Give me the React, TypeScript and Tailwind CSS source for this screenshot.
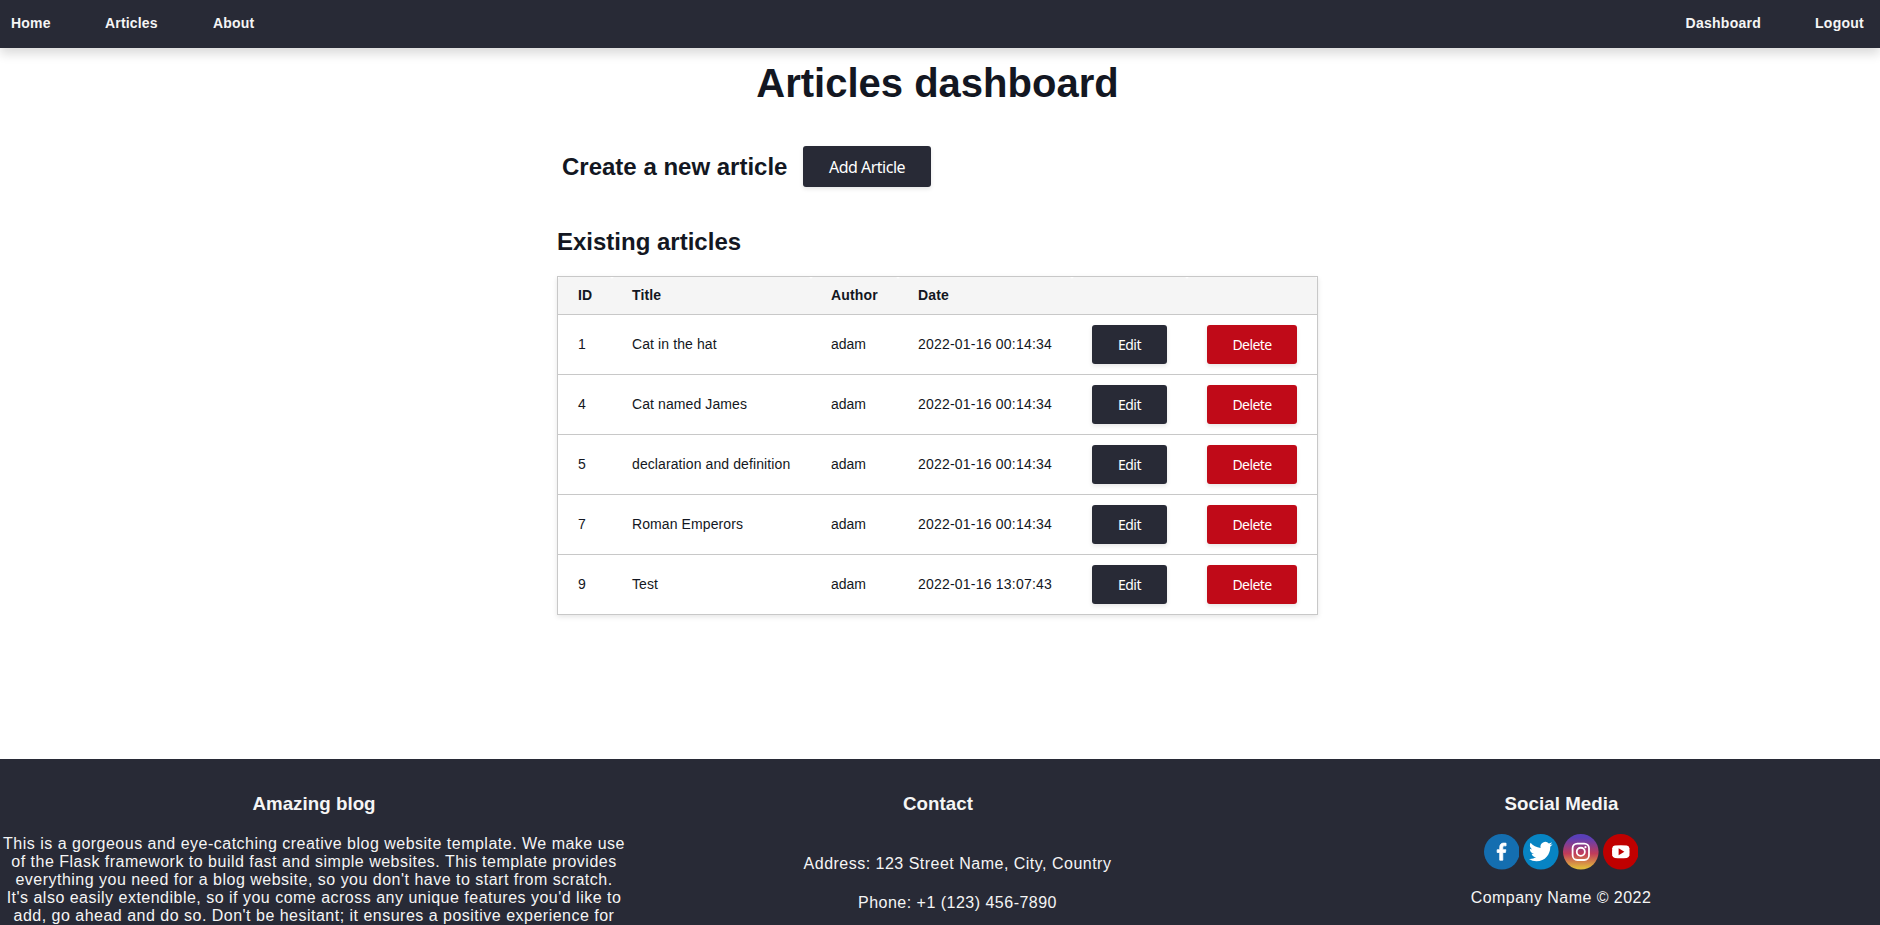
import React from "react";

const articles = [
  { id: 1, title: "Cat in the hat", author: "adam", date: "2022-01-16 00:14:34" },
  { id: 4, title: "Cat named James", author: "adam", date: "2022-01-16 00:14:34" },
  { id: 5, title: "declaration and definition", author: "adam", date: "2022-01-16 00:14:34" },
  { id: 7, title: "Roman Emperors", author: "adam", date: "2022-01-16 00:14:34" },
  { id: 9, title: "Test", author: "adam", date: "2022-01-16 13:07:43" },
];

const aboutLines = [
  "This is a gorgeous and eye-catching creative blog website template. We make use",
  "of the Flask framework to build fast and simple websites. This template provides",
  "everything you need for a blog website, so you don't have to start from scratch.",
  "It's also easily extendible, so if you come across any unique features you'd like to",
  "add, go ahead and do so. Don't be hesitant; it ensures a positive experience for",
];

const headers = ["ID", "Title", "Author", "Date", "", ""];

const buttonBase =
  "rounded-[3px] font-['Noto_Sans',sans-serif] text-white shadow-[0_2px_4px_rgba(0,0,0,0.1)]";

const cell = "border-t border-[#c8c8c8] p-0 pl-5";

function NavBar() {
  return (
    <nav className="relative flex h-12 shrink-0 justify-between bg-[#282a36] pl-[11px] pr-[16px] text-[14px] font-bold leading-[46px] text-[#f5f5f5] shadow-[0_6px_10px_rgba(0,0,0,0.14)]">
      <div className="flex tracking-[0.18px]">
        <a className="w-[94px]">Home</a>
        <a className="w-[108px]">Articles</a>
        <a>About</a>
      </div>
      <div className="flex gap-[54px] tracking-[0.26px]">
        <a>Dashboard</a>
        <a>Logout</a>
      </div>
    </nav>
  );
}

function ArticlesTable() {
  return (
    <div className="mt-5 w-[761px] border border-[#c8c8c8] shadow-[0_2px_5px_rgba(0,0,0,0.1)]">
      <table className="w-[759px] table-fixed border-separate border-spacing-0 text-left text-[14px]">
        <colgroup>
          <col className="w-[54px]" />
          <col className="w-[199px]" />
          <col className="w-[87px]" />
          <col className="w-[174px]" />
          <col className="w-[115px]" />
          <col className="w-[130px]" />
        </colgroup>
        <thead>
          <tr className="h-[37px]">
            {headers.map((h, i) => (
              <th key={i} className="rounded-t-[3px] bg-[#f5f5f5] p-0 pl-5 font-bold tracking-[0.15px]">
                {h}
              </th>
            ))}
          </tr>
        </thead>
        <tbody>
          {articles.map((a) => (
            <tr key={a.id} className="h-[60px]">
              <td className={cell}>{a.id}</td>
              <td className={`${cell} tracking-[0.1px]`}>{a.title}</td>
              <td className={cell}>{a.author}</td>
              <td className={`${cell} tracking-[0.21px]`}>{a.date}</td>
              <td className={cell}>
                <button className={`${buttonBase} block h-[39px] w-[75px] bg-[#282a36] text-[14px] tracking-[-0.55px]`}>Edit</button>
              </td>
              <td className={cell}>
                <button className={`${buttonBase} block h-[39px] w-[90px] bg-[#c00a18] text-[14px] tracking-[-0.6px]`}>Delete</button>
              </td>
            </tr>
          ))}
        </tbody>
      </table>
    </div>
  );
}

function SocialIcons() {
  return (
    <div className="mt-[19px] flex h-9 justify-center gap-1 pr-px">
      <svg className="size-[35.6px]" viewBox="0 0 36 36">
        <circle cx="18" cy="18" r="18" fill="#146eb0" />
        <path fill="#fff" stroke="#fff" strokeWidth="0.8" strokeLinejoin="round" d="M15.9 26.5v-7.8h-2.6v-2.8h2.6v-2.3c0-2.9 1.6-4.4 4.1-4.4 1.1 0 2.1.1 2.3.1v2.7h-1.6c-1.3 0-1.7.6-1.7 1.6v2.3h3.1l-.4 2.8h-2.7v7.8z" />
      </svg>
      <svg className="size-[35.6px]" viewBox="0 0 36 36">
        <circle cx="18" cy="18" r="18" fill="#0784c3" />
        <path fill="#fff" transform="translate(6 5.8)" d="M23.953 4.57a10 10 0 01-2.825.775 4.958 4.958 0 002.163-2.723c-.951.555-2.005.959-3.127 1.184a4.92 4.92 0 00-8.384 4.482C7.69 8.095 4.067 6.13 1.64 3.162a4.822 4.822 0 00-.666 2.475c0 1.71.87 3.213 2.188 4.096a4.904 4.904 0 01-2.228-.616v.06a4.923 4.923 0 003.946 4.827 4.996 4.996 0 01-2.212.085 4.936 4.936 0 004.604 3.417 9.867 9.867 0 01-6.102 2.105c-.39 0-.779-.023-1.17-.067a13.995 13.995 0 007.557 2.209c9.053 0 13.998-7.496 13.998-13.985 0-.21 0-.42-.015-.63A9.935 9.935 0 0024 4.59z" />
      </svg>
      <svg className="size-[35.6px]" viewBox="0 0 36 36">
        <defs>
          <linearGradient id="insta" x1="0" y1="0" x2="0" y2="1">
            <stop offset="0.1" stopColor="#5a3fb8" />
            <stop offset="0.55" stopColor="#c13b5a" />
            <stop offset="0.95" stopColor="#e0b83c" />
          </linearGradient>
        </defs>
        <circle cx="18" cy="18" r="18" fill="url(#insta)" />
        <g fill="none" stroke="#fff" strokeWidth="1.8">
          <rect x="9.7" y="9.7" width="16.6" height="16.6" rx="4.8" />
          <circle cx="18" cy="18" r="4.1" />
        </g>
        <circle cx="22.7" cy="13.3" r="1.1" fill="#fff" />
      </svg>
      <svg className="size-[35.6px]" viewBox="0 0 36 36">
        <circle cx="18" cy="18" r="18" fill="#c00000" />
        <path fill="#fff" d="M12 11.7Q18 11.2 24 11.7Q26.4 12 26.7 14.4Q27 18 26.7 21.6Q26.4 24 24 24.3Q18 24.8 12 24.3Q9.6 24 9.3 21.6Q9 18 9.3 14.4Q9.6 12 12 11.7z" />
        <path fill="#c00000" d="M15.8 14.5v7l5.8-3.5z" />
      </svg>
    </div>
  );
}

function Footer() {
  const heading = "text-[18.72px] font-bold leading-[22px] tracking-[0.05px]";
  return (
    <footer className="flex h-[166px] shrink-0 overflow-hidden bg-[#282a36] pl-[2px] pt-[34px] text-center text-[16px] leading-[18px] text-[#f5f5f5]">
      <section className="w-[624px] shrink-0">
        <h3 className={heading}>Amazing blog</h3>
        <p className="mt-[20px] whitespace-nowrap tracking-[0.49px]">
          {aboutLines.map((line) => (
            <span key={line} className="block">{line}</span>
          ))}
        </p>
      </section>
      <section className="w-[624px] shrink-0">
        <h3 className={heading}>Contact</h3>
        <ul className="mt-[40px] flex flex-col gap-[21px] pl-[39px] tracking-[0.49px]">
          <li>Address: 123 Street Name, City, Country</li>
          <li>Phone: +1 (123) 456-7890</li>
        </ul>
      </section>
      <section className="w-[623px] shrink-0">
        <h3 className={heading}>Social Media</h3>
        <SocialIcons />
        <p className="mt-[19px] pr-px tracking-[0.46px]">Company Name © 2022</p>
      </section>
    </footer>
  );
}

export default function App() {
  return (
    <div className="flex h-[925px] w-full flex-col overflow-hidden bg-white font-['Liberation_Sans',Arial,sans-serif] text-[#131722]">
      <NavBar />
      <main className="flex flex-1 flex-col pl-[557px]">
        <h1 className="mt-[12px] w-[761px] text-center text-[40px] font-bold leading-[46px]">Articles dashboard</h1>
        <div className="mt-10 flex items-center pl-[5px]">
          <h2 className="w-[241px] text-[24px] font-bold leading-[28px]">Create a new article</h2>
          <button className={`${buttonBase} h-[41px] w-[128px] bg-[#282a36] pt-px text-[16px] tracking-[-0.5px]`}>Add Article</button>
        </div>
        <h2 className="mt-[41px] text-[24px] font-bold leading-[28px]">Existing articles</h2>
        <ArticlesTable />
      </main>
      <Footer />
    </div>
  );
}
